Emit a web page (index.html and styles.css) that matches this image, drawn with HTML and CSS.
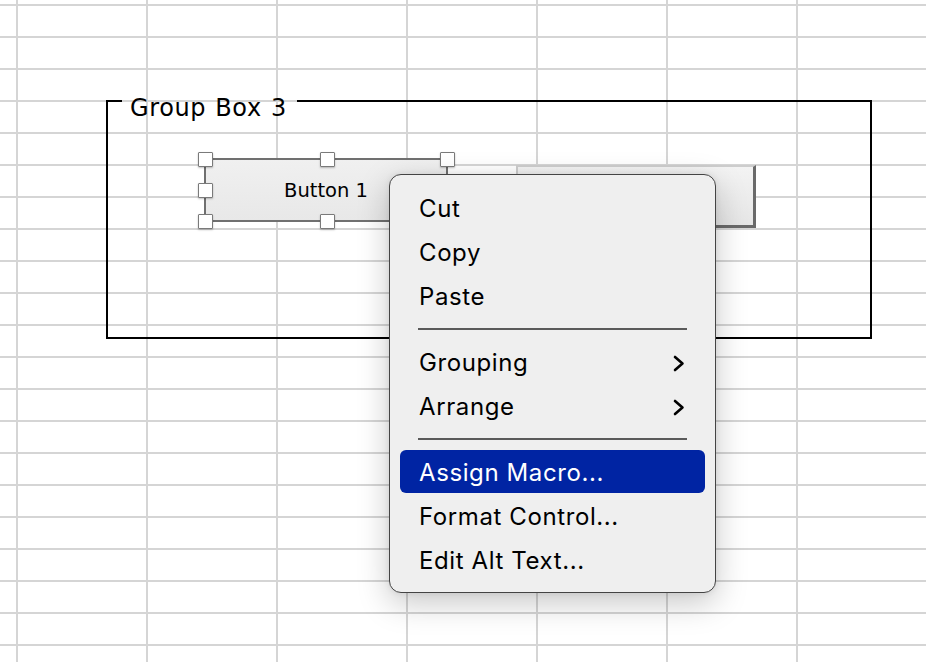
FILE: index.html
```html
<!DOCTYPE html>
<html lang="en">
<head>
<meta charset="utf-8">
<title>Sheet</title>
<link rel="stylesheet" href="styles.css">
</head>
<body>
<div class="sheet">
  <div class="groupbox">
    <div class="gb-top">
      <span class="gb-seg gb-seg-start"></span>
      <span class="gb-label">Group Box 3</span>
      <span class="gb-seg gb-seg-end"></span>
    </div>
  </div>

  <div class="btn btn-two"></div>

  <div class="btn btn-one">
    <span class="btn-text">Button 1</span>
    <span class="handle h-tl"></span>
    <span class="handle h-tc"></span>
    <span class="handle h-tr"></span>
    <span class="handle h-ml"></span>
    <span class="handle h-mr"></span>
    <span class="handle h-bl"></span>
    <span class="handle h-bc"></span>
    <span class="handle h-br"></span>
  </div>

  <div class="menu">
    <div class="menu-item">Cut</div>
    <div class="menu-item">Copy</div>
    <div class="menu-item">Paste</div>
    <div class="menu-sep"></div>
    <div class="menu-item">Grouping
      <svg class="chev" width="12" height="17" viewBox="0 0 12 17"><path d="M2 2 L9.5 8.5 L2 15" fill="none" stroke="#000" stroke-width="2.6" stroke-linecap="round" stroke-linejoin="round"/></svg>
    </div>
    <div class="menu-item">Arrange
      <svg class="chev" width="12" height="17" viewBox="0 0 12 17"><path d="M2 2 L9.5 8.5 L2 15" fill="none" stroke="#000" stroke-width="2.6" stroke-linecap="round" stroke-linejoin="round"/></svg>
    </div>
    <div class="menu-sep"></div>
    <div class="menu-item is-active">Assign Macro...</div>
    <div class="menu-item">Format Control...</div>
    <div class="menu-item">Edit Alt Text...</div>
  </div>
</div>
</body>
</html>
```

FILE: styles.css
```css
html, body {
  margin: 0;
  padding: 0;
}

body {
  width: 926px;
  height: 662px;
  overflow: hidden;
  background: #ffffff;
}

.sheet {
  position: relative;
  width: 926px;
  height: 662px;
  background-color: #ffffff;
  background-image:
    linear-gradient(to right, #d5d5d5 2px, transparent 2px),
    linear-gradient(to bottom, #d5d5d5 2px, transparent 2px);
  background-size: 130px 32px, 130px 32px;
  background-position: 16px 0, 0 4px;
}

/* Group box */
.groupbox {
  position: absolute;
  left: 106px;
  top: 100px;
  width: 766px;
  height: 239px;
  box-sizing: border-box;
  border: 2px solid #000;
  border-top: none;
}

.gb-top {
  display: flex;
  align-items: flex-start;
  margin: 0 -2px;
}

.gb-seg {
  border-top: 2px solid #000;
}

.gb-seg-start {
  width: 16px;
}

.gb-seg-end {
  flex: 1;
}

.gb-label {
  margin-top: -6px;
  padding: 0 10px 0 8px;
  font-family: "DejaVu Sans", sans-serif;
  font-size: 24px;
  line-height: 28px;
  letter-spacing: 0.6px;
  word-spacing: 1px;
  color: #000;
  white-space: nowrap;
}

/* Buttons */
.btn {
  position: absolute;
  box-sizing: border-box;
}

.btn-one {
  left: 204px;
  top: 158px;
  width: 244px;
  height: 64px;
  border: 2px solid #707070;
  background: linear-gradient(to bottom, #f0f0f0, #e8e8e8);
  display: flex;
  align-items: center;
  justify-content: center;
}

.btn-text {
  font-family: "DejaVu Sans", sans-serif;
  font-size: 19.5px;
  color: #000;
}

.btn-two {
  left: 516px;
  top: 165px;
  width: 240px;
  height: 63px;
  border-top: 2px solid #cdcdcd;
  border-left: 2px solid #cdcdcd;
  border-right: 3px solid #6a6a6a;
  border-bottom: 3px solid #6a6a6a;
  background: linear-gradient(to bottom, #f3f3f3, #e6e6e6);
}

.handle {
  position: absolute;
  width: 15px;
  height: 15px;
  box-sizing: border-box;
  background: #fff;
  border: 1px solid #7a7a7a;
  border-radius: 1px;
  box-shadow: 0 1px 2px rgba(0, 0, 0, 0.25);
}

.h-tl { left: -8px; top: -8px; }
.h-tc { left: 114px; top: -8px; }
.h-tr { left: 234px; top: -8px; }
.h-ml { left: -8px; top: 23px; }
.h-mr { left: 234px; top: 23px; }
.h-bl { left: -8px; top: 54px; }
.h-bc { left: 114px; top: 54px; }
.h-br { left: 234px; top: 54px; }

/* Context menu */
.menu {
  position: absolute;
  left: 389px;
  top: 174px;
  width: 327px;
  height: 419px;
  box-sizing: border-box;
  padding: 11px 10px;
  background: #efefef;
  border: 1.5px solid #444;
  border-radius: 12px;
  box-shadow: 0 10px 32px rgba(0, 0, 0, 0.22), 0 0 6px rgba(0, 0, 0, 0.08);
  font-family: "Inter", "Noto Sans", sans-serif;
  font-size: 24px;
  letter-spacing: 0.6px;
  color: #000;
}

.menu-item {
  height: 44px;
  box-sizing: border-box;
  display: flex;
  align-items: center;
  justify-content: space-between;
  padding: 1px 20px 0 19px;
  border-radius: 6px;
  white-space: nowrap;
}

.menu-item.is-active {
  height: 43px;
  margin-bottom: 1px;
  background: #0024a3;
  color: #fff;
}

.chev {
  display: block;
  margin-top: 2px;
}

.menu-sep {
  height: 22px;
  display: flex;
  align-items: center;
  padding: 0 18px;
}

.menu-sep::after {
  content: "";
  flex: 1;
  height: 2px;
  background: #5a5a5a;
}
```
